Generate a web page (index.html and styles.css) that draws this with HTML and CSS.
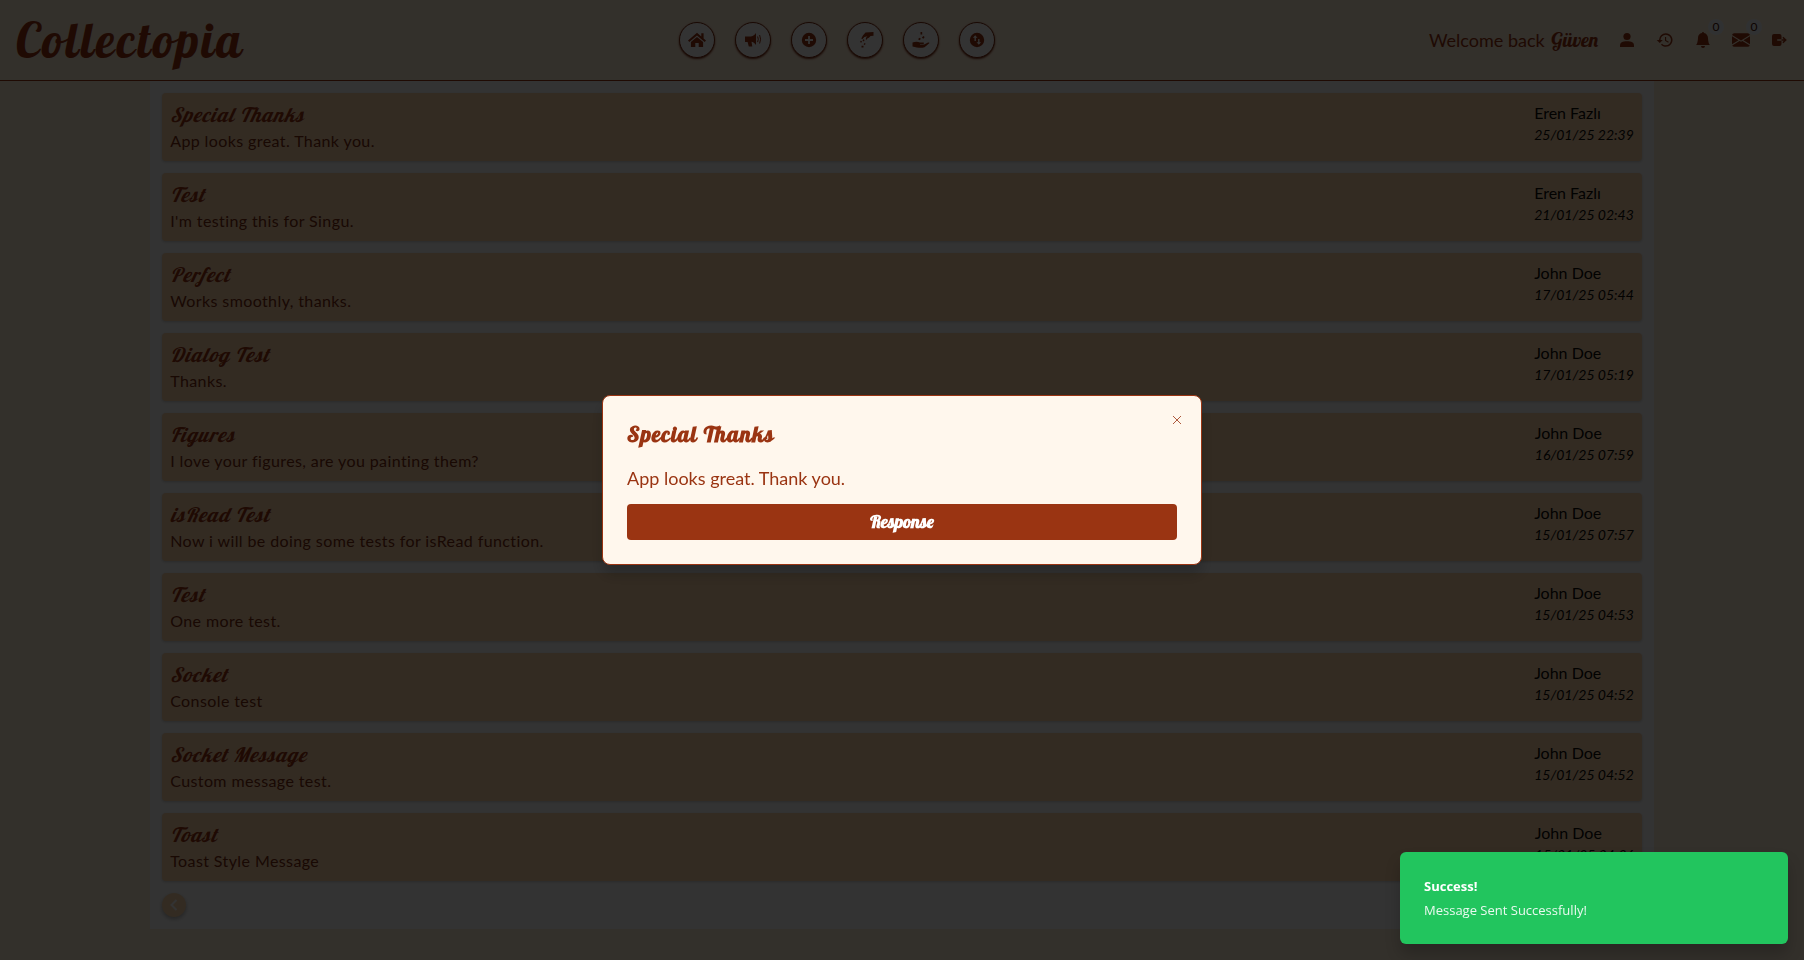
FILE: index.html
```html
<!DOCTYPE html>
<html lang="en">
<head>
<meta charset="utf-8">
<meta name="viewport" content="width=device-width, initial-scale=1">
<title>Collectopia</title>
<link rel="stylesheet" href="styles.css">
</head>
<body>
<header class="topbar">
  <a class="logo" href="#">Collectopia</a>
  <nav class="nav" aria-label="Main">
    <button class="nav-btn" type="button" aria-label="Home"><svg class="icon" viewBox="0 0 18 18"><path d="M9 1.800 0 9.600l1.300 1.500L9 4.500l7.700 6.600L18 9.600l-2.400-2.100V2.200h-2.300v3.300z"/><path d="M9 5.900 2.900 11.100V16h4.400v-4h3.400v4h4.400v-4.900z"/></svg></button>
    <button class="nav-btn" type="button" aria-label="Announcements"><svg class="icon" viewBox="0 0 18 18"><path d="M1 5.500h5.500c2 0 4-1.200 5.500-3.500v12c-1.300-2-2.900-3-4.500-3.300L8.300 15.500H4.800L3.600 11H1z"/><path class="line" d="M13.600 5.500q1.400 2.800 0 5.600M15.600 4q2 4.200 0 8.500"/></svg></button>
    <button class="nav-btn" type="button" aria-label="Add"><svg class="icon" viewBox="0 0 18 18"><path fill-rule="evenodd" d="M9 1.800a7.200 7.200 0 1 0 0 14.400A7.200 7.200 0 0 0 9 1.800zM8.100 5h1.800v3.100H13v1.800H9.900V13H8.100V9.900H5V8.100h3.100z"/></svg></button>
    <button class="nav-btn" type="button" aria-label="Give"><svg class="icon" viewBox="0 0 18 18"><path d="M17.500 1v3.800l-3 .2c-.8 1.300-1.800 2-3 2.200l-.8 1.600-1-.5.500-1.700 1.200-1.300-3 .6-2.100 2.300-1-.8 1.600-3L9.500 1.500z"/><path d="m7.300 8.300 1.300.8-.8 1.300-1.300-.8zM4.800 9.800l1.300.7-.9 1.200-1.200-.8zM8.500 12l1.200.7-.9 1.200-1.200-.7zM5.500 14.800h2v1.700h-2z"/></svg></button>
    <button class="nav-btn" type="button" aria-label="Receive"><svg class="icon" viewBox="0 0 18 18"><path d="M.5 11.500c3-1 5.300-1 7.500.1h3.300c1 0 1 1.200 0 1.300H8v.5h4.200l3.800-1.900c1.100-.4 1.800.3 1 1.100l-4.500 3.600C9 17.300 5 16.500.5 15.400z"/><path d="M8.500 1h1.700v2.600H8.500zM11.200 5l1.500.9-1.300 1.800-1.500-.9zM7 6.700l1.800.8-.9 1.700-1.700-.8z"/></svg></button>
    <button class="nav-btn" type="button" aria-label="Trade"><svg class="icon" viewBox="0 0 18 18"><path fill-rule="evenodd" d="M9 1.800a7.200 7.200 0 1 0 0 14.400A7.200 7.200 0 0 0 9 1.800zM7.200 4.200 4.900 6.700h1.600V10h1.400V6.700h1.600zM10.100 8h1.400v3.300h1.600l-2.300 2.500-2.300-2.500h1.600z"/></svg></button>
  </nav>
  <div class="account">
    <p class="welcome">Welcome back <span class="user-name">Güven</span></p>
    <button class="tool" type="button" aria-label="Profile"><svg class="icon" viewBox="0 0 18 18"><circle cx="9" cy="5.500" r="3.600"/><path d="M2 16v-1.500c0-3 2.500-4.200 7-4.200s7 1.200 7 4.200V16z"/></svg></button>
    <button class="tool" type="button" aria-label="History"><svg class="icon" viewBox="0 0 24 24"><path d="M13 3a9 9 0 0 0-9 9H1l4 4 4-4H6a7 7 0 1 1 7 7c-1.930 0-3.680-.790-4.940-2.060l-1.420 1.420A9 9 0 1 0 13 3zm-1 5v5l4.280 2.540.720-1.210-3.500-2.080V8z"/></svg></button>
    <button class="tool" type="button" aria-label="Notifications"><svg class="icon icon-small" viewBox="0 0 16 16"><path d="M8 16a2 2 0 0 0 2-2H6a2 2 0 0 0 2 2m.995-14.901a1 1 0 1 0-1.990 0A5 5 0 0 0 3 6c0 1.098-.5 6-2 7h14c-1.500-1-2-5.902-2-7 0-2.420-1.720-4.440-4.005-4.901"/></svg><span class="badge">0</span></button>
    <button class="tool" type="button" aria-label="Messages"><svg class="icon" viewBox="0 0 16 16"><path d="M.050 3.555A2 2 0 0 1 2 2h12a2 2 0 0 1 1.950 1.555L8 8.414zM0 4.697v7.104l5.803-3.558zM6.761 8.830l-6.570 4.027A2 2 0 0 0 2 14h12a2 2 0 0 0 1.808-1.144l-6.570-4.027L8 9.586zm3.436-.586L16 11.801V4.697z"/></svg><span class="badge">0</span></button>
    <button class="tool" type="button" aria-label="Log out"><svg class="icon" viewBox="0 0 18 18"><path d="M4 3h5.500a2 2 0 0 1 2 2v3.200H7.200v1.600h4.300V13a2 2 0 0 1-2 2H4a2 2 0 0 1-2-2V5a2 2 0 0 1 2-2z"/><path d="M11.500 8.200h2.300l-1.400-1.500 1-1 3.400 3.300-3.400 3.300-1-1 1.400-1.500h-2.300z"/></svg></button>
  </div>
</header>

<main class="inbox">
  <ul class="list">
    <li class="card"><div class="body"><h2 class="title">Special Thanks</h2><p class="text">App looks great. Thank you.</p></div><div class="meta"><p class="sender">Eren Fazlı</p><time class="date">25/01/25 22:39</time></div></li>
    <li class="card"><div class="body"><h2 class="title">Test</h2><p class="text">I'm testing this for Singu.</p></div><div class="meta"><p class="sender">Eren Fazlı</p><time class="date">21/01/25 02:43</time></div></li>
    <li class="card"><div class="body"><h2 class="title">Perfect</h2><p class="text">Works smoothly, thanks.</p></div><div class="meta"><p class="sender">John Doe</p><time class="date">17/01/25 05:44</time></div></li>
    <li class="card"><div class="body"><h2 class="title">Dialog Test</h2><p class="text">Thanks.</p></div><div class="meta"><p class="sender">John Doe</p><time class="date">17/01/25 05:19</time></div></li>
    <li class="card"><div class="body"><h2 class="title">Figures</h2><p class="text">I love your figures, are you painting them?</p></div><div class="meta"><p class="sender">John Doe</p><time class="date">16/01/25 07:59</time></div></li>
    <li class="card"><div class="body"><h2 class="title">isRead Test</h2><p class="text">Now i will be doing some tests for isRead function.</p></div><div class="meta"><p class="sender">John Doe</p><time class="date">15/01/25 07:57</time></div></li>
    <li class="card"><div class="body"><h2 class="title">Test</h2><p class="text">One more test.</p></div><div class="meta"><p class="sender">John Doe</p><time class="date">15/01/25 04:53</time></div></li>
    <li class="card"><div class="body"><h2 class="title">Socket</h2><p class="text">Console test</p></div><div class="meta"><p class="sender">John Doe</p><time class="date">15/01/25 04:52</time></div></li>
    <li class="card"><div class="body"><h2 class="title">Socket Message</h2><p class="text">Custom message test.</p></div><div class="meta"><p class="sender">John Doe</p><time class="date">15/01/25 04:52</time></div></li>
    <li class="card"><div class="body"><h2 class="title">Toast</h2><p class="text">Toast Style Message</p></div><div class="meta"><p class="sender">John Doe</p><time class="date">15/01/25 04:36</time></div></li>
  </ul>
  <button class="page-btn" type="button" aria-label="Previous page" disabled><svg class="chevron" viewBox="0 0 16 16"><path d="M10.500 3 5.500 8l5 5"/></svg></button>
</main>

<div class="overlay">
  <section class="modal" role="dialog" aria-modal="true" aria-labelledby="modal-title">
    <h2 class="modal-title" id="modal-title">Special Thanks</h2>
    <p class="modal-text">App looks great. Thank you.</p>
    <button class="respond" type="button">Response</button>
    <button class="close" type="button" aria-label="Close"><svg class="cross" viewBox="0 0 16 16"><path d="m4 4 8 8M12 4l-8 8"/></svg></button>
  </section>
</div>

<div class="toast" role="status">
  <p class="toast-title">Success!</p>
  <p class="toast-text">Message Sent Successfully!</p>
</div>
</body>
</html>
```
FILE: styles.css
```css
:root {
  --rust: #9a3412;
  --rust-dark: #7c2d12;
  --script: "Lobster", "Liberation Serif", serif;
  --sans: "Lato", "Liberation Sans", sans-serif;
}

* { box-sizing: border-box; }

body, h2, p, ul { margin: 0; padding: 0; }

body {
  min-height: 100vh;
  background: #ffedd5;
  color: var(--rust);
  font-family: var(--sans);
  font-size: 16px;
  line-height: 24px;
}

button {
  padding: 0;
  border: 0;
  background: none;
  color: inherit;
  font: inherit;
  cursor: pointer;
}

.icon {
  display: block;
  width: 18px;
  height: 18px;
  fill: currentColor;
}

.icon-small { width: 16px; height: 16px; }

.icon .line {
  fill: none;
  stroke: currentColor;
  stroke-width: 1;
}

.topbar {
  display: flex;
  align-items: center;
  justify-content: space-between;
  min-height: 81px;
  padding: 0 16px;
  border-bottom: 1px solid var(--rust);
}

.logo {
  color: var(--rust);
  font: 48px/60px var(--script);
  letter-spacing: 0.05em;
  text-decoration: none;
}

.nav, .account {
  display: flex;
  align-items: center;
  gap: 20px;
}

.nav-btn {
  display: grid;
  place-items: center;
  width: 36px;
  height: 36px;
  border: 1px solid var(--rust-dark);
  border-radius: 50%;
  background: #fff;
  box-shadow: 0 1px 2px var(--rust-dark);
}

.welcome { font-size: 18px; line-height: 28px; }

.user-name {
  margin-left: 2px;
  font: 20px/28px var(--script);
}

.tool {
  position: relative;
  display: grid;
  place-items: center;
  width: 18px;
  height: 18px;
}

.badge {
  position: absolute;
  top: -12px;
  left: 14px;
  width: 16px;
  height: 16px;
  border-radius: 50%;
  background: #f1f5f9;
  color: #431407;
  font-size: 12px;
  line-height: 16px;
}

.inbox {
  width: 83.35%;
  margin: 0 auto;
  padding: 12px;
  background: #fff;
}

.list {
  display: grid;
  gap: 12px;
  margin-bottom: 12px;
  list-style: none;
}

.card {
  display: flex;
  justify-content: space-between;
  padding: 8px;
  border-radius: 4px;
  background: #fed7aa;
  box-shadow: 0 1px 3px rgba(0, 0, 0, 0.2);
}

.title {
  font: italic 20px/28px var(--script);
  letter-spacing: 0.05em;
}

.text {
  color: var(--rust-dark);
  letter-spacing: 0.025em;
}

.sender { color: #0c0a09; }

.date {
  display: block;
  color: #0c0a09;
  font-size: 14px;
  font-style: italic;
  line-height: 20px;
}

.page-btn {
  display: grid;
  place-items: center;
  width: 24px;
  height: 24px;
  border-radius: 50%;
  background: #fed7aa;
  box-shadow: 0 2px 4px rgba(0, 0, 0, 0.3);
}

.chevron, .cross {
  display: block;
  width: 16px;
  height: 16px;
  fill: none;
  stroke: #fff;
  stroke-width: 2;
}

.overlay {
  position: fixed;
  inset: 0;
  display: grid;
  place-items: center;
  background: rgba(0, 0, 0, 0.8);
}

.modal {
  position: relative;
  width: min(600px, 100%);
  padding: 24px;
  border: 1px solid var(--rust);
  border-radius: 8px;
  background: #fff7ed;
  box-shadow: 0 10px 15px rgba(0, 0, 0, 0.2);
}

.modal-title {
  margin-bottom: 16px;
  font: bold 22px/28px var(--script);
  letter-spacing: 0.05em;
}

.modal-text {
  margin-bottom: 12px;
  font-size: 18px;
  line-height: 28px;
}

.respond {
  display: block;
  width: 100%;
  height: 36px;
  border-radius: 4px;
  background: var(--rust);
  color: #fff;
  font: bold 18px/24px var(--script);
}

.close {
  position: absolute;
  top: 16px;
  right: 16px;
  opacity: 0.8;
}

.cross { stroke: var(--rust); stroke-width: 1; }

.toast {
  position: fixed;
  right: 16px;
  bottom: 16px;
  width: min(388px, 100%);
  padding: 24px;
  border-radius: 6px;
  background: #22c55e;
  box-shadow: 0 10px 15px rgba(0, 0, 0, 0.2);
  color: #fff;
  font: 13px/20px "Open Sans", "Noto Sans", sans-serif;
}

.toast-title {
  margin-bottom: 4px;
  font-weight: 700;
}

.toast-text { opacity: 0.9; }
```
